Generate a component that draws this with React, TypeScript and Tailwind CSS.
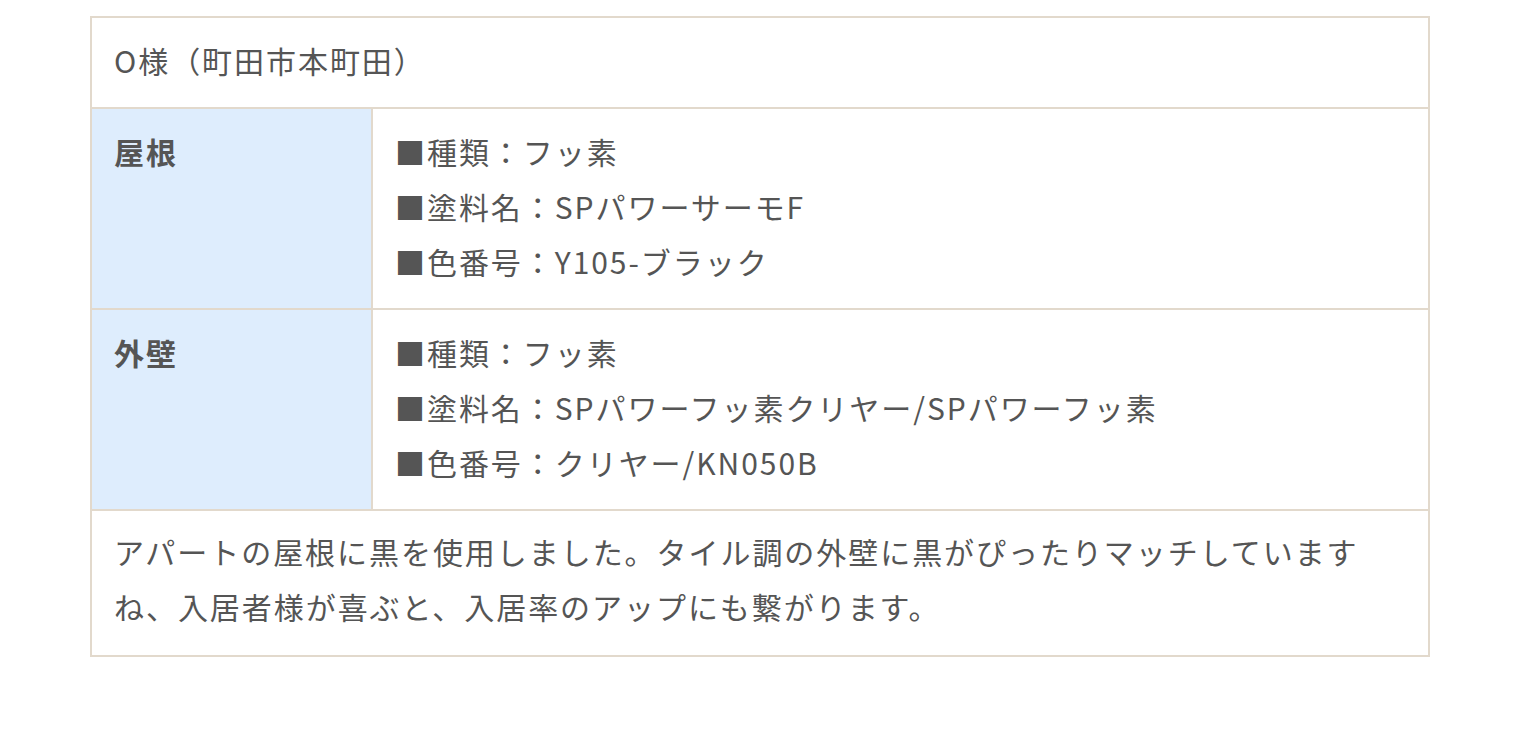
const rows = [
  {
    label: '屋根',
    items: ['■種類：フッ素', '■塗料名：SPパワーサーモF', '■色番号：Y105-ブラック'],
  },
  {
    label: '外壁',
    items: ['■種類：フッ素', '■塗料名：SPパワーフッ素クリヤー/SPパワーフッ素', '■色番号：クリヤー/KN050B'],
  },
];

const App = () => {
  return (
    <div
      className="min-h-[742px] bg-white pt-4 pl-[90px] text-[#555] text-[30px] leading-[55px] tracking-[0.065em]"
      style={{ fontFamily: '"Noto Sans CJK JP", "Noto Sans", sans-serif' }}
    >
      <table className="w-[1340px] border-collapse border-2 border-[#e2d9cc]">
        <tbody>
          <tr>
            <td colSpan={2} className="border-2 border-[#e2d9cc] px-[22px] pt-[15px] pb-[19px]">
              O様（町田市本町田）
            </td>
          </tr>
          {rows.map((row) => (
            <tr key={row.label}>
              <th className="w-[281px] border-2 border-[#e2d9cc] bg-[#deedfd] px-[22px] pt-[15px] pb-[19px] text-left align-top font-bold">
                {row.label}
              </th>
              <td className="border-2 border-[#e2d9cc] px-[22px] pt-[15px] pb-[19px] align-top">
                {row.items.map((item) => (
                  <div key={item}>{item}</div>
                ))}
              </td>
            </tr>
          ))}
          <tr>
            <td colSpan={2} className="border-2 border-[#e2d9cc] px-[22px] pt-[13px] pb-[21px]">
              アパートの屋根に黒を使用しました。タイル調の外壁に黒がぴったりマッチしていますね、入居者様が喜ぶと、入居率のアップにも繋がります。
            </td>
          </tr>
        </tbody>
      </table>
    </div>
  );
};

export default App;
